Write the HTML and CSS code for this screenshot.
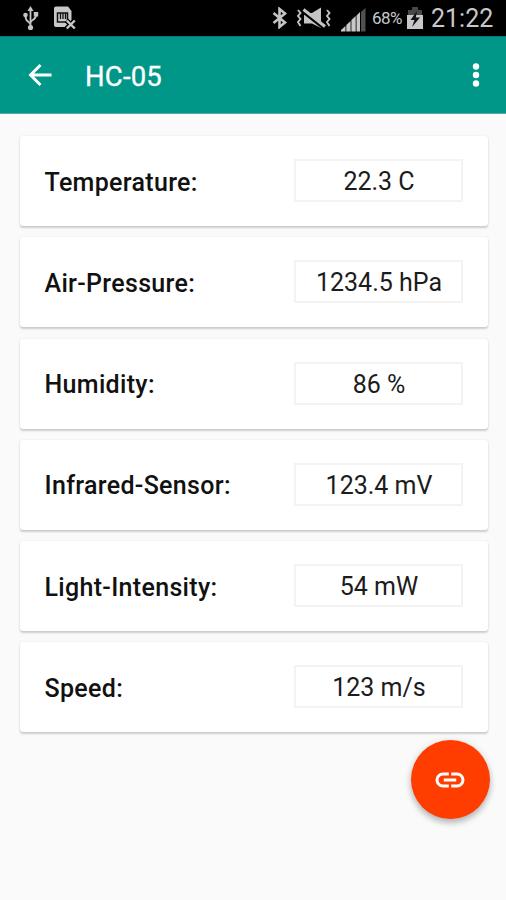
FILE: index.html
```html
<!DOCTYPE html>
<html lang="en">
<head>
<meta charset="utf-8">
<title>HC-05</title>
<link rel="stylesheet" href="styles.css">
</head>
<body>
<div class="status">
  <svg class="usb" width="16" height="26" viewBox="0 0 16 26" fill="none" stroke="#c4c4c4" stroke-width="1.800"><path d="M7.500 3v20M7.500 19.500C7 16 2.500 18 2.500 11M7.500 17.500C8 14 13 16 13 9.500"/><g fill="#c4c4c4" stroke="none"><path d="M7.500 1l3 5h-6z"/><circle cx="7.500" cy="22.500" r="2.600"/><circle cx="2.500" cy="10" r="2.300"/><path d="M10.800 7h4.400v4.400h-4.400z"/></g></svg>
  <svg class="sd" width="24" height="26" viewBox="0 0 24 26"><path d="M2 1.500h12l3.500 4.500v9l-4 4v3H2q-2 0-2-2v-16.500q0-2 2-2z" fill="#c8c8c8"/><path d="M3.500 8h10v9h-10z" fill="#c8c8c8" stroke="#111" stroke-width="1.500"/><path d="M6.500 8v6M9 8v6M11.500 8v6" stroke="#111" stroke-width="1.300"/><path d="M12.500 15.500l8.500 8M21 15.500l-8.500 8" stroke="#000" stroke-width="5"/><path d="M12.800 15.500l8 8M20.800 15.500l-8 8" stroke="#c8c8c8" stroke-width="2.400"/></svg>
  <svg class="bt" width="16" height="22" viewBox="0 0 16 22" fill="none" stroke="#c4c4c4" stroke-width="2.600"><path d="M1.500 6l11.500 9.500-5.500 4.500V2L13 6.500 1.500 16"/></svg>
  <svg class="mute" width="36" height="22" viewBox="0 0 36 22"><path d="M8 6h8l9-5.500v20.500l-9-4.500H8z" fill="#c4c4c4"/><path d="M6.500 3.500l21 16.500" stroke="#000" stroke-width="4.600"/><path d="M7.500 2.500l21.500 17" stroke="#c4c4c4" stroke-width="3"/><path d="M2 3l2.500 3L2 9l2.500 3L2 15l2.500 4M31 3l2.500 3L31 9l2.500 3L31 15l2.500 4" fill="none" stroke="#c4c4c4" stroke-width="1.900"/></svg>
  <svg class="signal" width="26" height="24" viewBox="0 0 26 24" fill="#c8c8c8"><path d="M0 23.500V22l4.500-4v5.500zM5.300 23.500v-6.500l4.300-4v10.500zM10.400 23.500v-11.500l4.300-4v15.500zM15.500 23.500v-16l3.500-3.500v19.500z"/><path d="M20 23.500V4l4.500-4v23.500z" fill="#505050"/></svg>
  <span class="percent">68%</span>
  <svg class="battery" width="16" height="24" viewBox="0 0 16 24"><path d="M5 1h6v3h4v5H1V4h4z" fill="#484848"/><path d="M0 9h16v14H0z" fill="#c8c8c8"/><path d="M10 5L3.500 14h4L5 21l8-9.500H8.800z" fill="#111"/></svg>
  <span class="clock">21:22</span>
</div>
<header class="appbar">
  <svg class="back" width="26" height="24" viewBox="0 0 26 24" fill="none" stroke="#fff" stroke-width="2.900"><path d="M12.500 2L2.500 12l10 10M3 12H23.500"/></svg>
  <h1 class="title">HC-05</h1>
  <svg class="more" width="8" height="26" viewBox="0 0 8 26" fill="#fff"><circle cx="4" cy="4.500" r="3.200"/><circle cx="4" cy="13" r="3.200"/><circle cx="4" cy="21.500" r="3.200"/></svg>
</header>
<main class="list">
  <section class="card"><span class="label">Temperature:</span><span class="value">22.3 C</span></section>
  <section class="card"><span class="label">Air-Pressure:</span><span class="value">1234.5 hPa</span></section>
  <section class="card"><span class="label">Humidity:</span><span class="value">86 %</span></section>
  <section class="card"><span class="label">Infrared-Sensor:</span><span class="value">123.4 mV</span></section>
  <section class="card"><span class="label">Light-Intensity:</span><span class="value">54 mW</span></section>
  <section class="card"><span class="label">Speed:</span><span class="value">123 m/s</span></section>
</main>
<div class="fab"><svg width="30" height="18" viewBox="0 0 30 18" fill="none" stroke="#fff" stroke-width="3"><path d="M13.800 3H8a6 6 0 0 0 0 12h5.800M16.200 3H22a6 6 0 0 1 0 12h-5.800M8.800 9h12.400"/></svg></div>
</body>
</html>
```
FILE: styles.css
```css
* { box-sizing: border-box; }
body { margin: 0; width: 506px; height: 900px; background: #fafafa; font-family: Roboto, sans-serif; overflow: hidden; position: relative; }
svg { display: block; flex: none; }
.status { height: 36px; background: #000; color: #c8c8c8; display: flex; align-items: center; padding-left: 23px; }
.sd { margin-left: 15px; }
.bt { margin-left: 194px; }
.mute { margin-left: 8px; }
.signal { margin-left: 9px; margin-top: 3px; }
.percent { margin-left: 5px; width: 31px; font-size: 17px; letter-spacing: -0.6px; }
.battery { margin-left: 4px; }
.clock { margin-left: 8px; font-size: 25px; white-space: nowrap; }
.appbar { height: 78px; background: #009688; border-top: 1px solid #087c70; border-bottom: 1px solid #55aaa1; display: flex; align-items: center; padding: 0 26px 0 28px; }
.title { margin: 3px 0 0 31px; font-size: 27.5px; font-weight: 400; letter-spacing: 0.2px; color: #fff; -webkit-text-stroke: 0.3px #fff; }
.more { margin-left: auto; }
.list { padding: 22px 18px 0 20px; display: grid; gap: 11.3px; }
.card { height: 90px; background: #fff; border-radius: 3px; box-shadow: 0 2px 2px rgba(0,0,0,.17), 0 0 2px rgba(0,0,0,.1); display: flex; align-items: center; justify-content: space-between; padding: 0 25px 0 24.500px; }
.label { padding-top: 2px; font-size: 25px; font-weight: 500; letter-spacing: 0.32px; color: #111; white-space: nowrap; }
.value { width: 169px; height: 43px; margin-bottom: 1px; padding: 2px 0 0 1px; border: 2px solid #f3f3f3; display: flex; align-items: center; justify-content: center; font-size: 25px; color: #1c1c1c; white-space: nowrap; }
.fab { position: absolute; left: 411px; top: 740px; width: 79px; height: 79px; padding-right: 1px; border-radius: 50%; background: #ff3d00; display: flex; align-items: center; justify-content: center; box-shadow: 0 4px 6px rgba(0,0,0,.25), 0 0 8px rgba(0,0,0,.08); }
```
